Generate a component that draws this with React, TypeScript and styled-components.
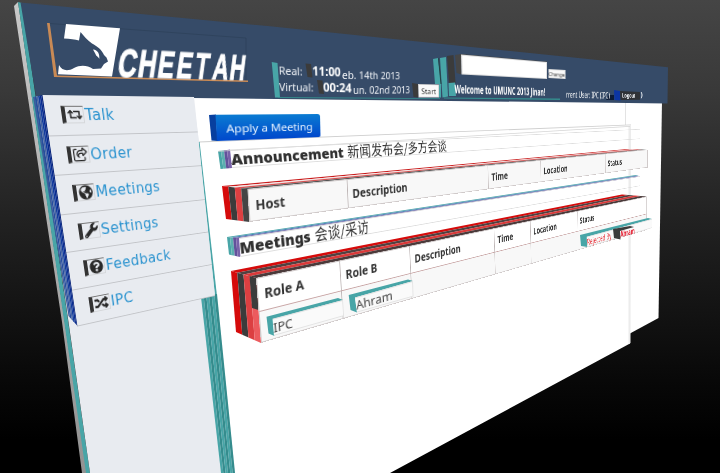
import React from "react";
import styled, { createGlobalStyle, css } from "styled-components";
import { FaRetweet, FaWrench, FaQuestionCircle, FaRandom, FaGlobeAmericas } from "react-icons/fa";
import { FaRegShareFromSquare } from "react-icons/fa6";

type Point = [number, number];
type Quad = [Point, Point, Point, Point];

const TEAL = "#48a5a7";
const TEAL_DARK = "#358c8d";
const NAVY = "#364b68";
const RED = "#d50b0b";
const SOFT_RED = "#dc3f41";
const COAL = "#3b3b3b";

/* Projects a w×h rectangle onto four corners (clockwise from top left). */
function project(w: number, h: number, q: Quad): string {
  const [[x0, y0], [x1, y1], [x2, y2], [x3, y3]] = q;
  const dx1 = x1 - x2;
  const dx2 = x3 - x2;
  const dx3 = x0 - x1 + x2 - x3;
  const dy1 = y1 - y2;
  const dy2 = y3 - y2;
  const dy3 = y0 - y1 + y2 - y3;
  const det = dx1 * dy2 - dx2 * dy1;
  const g = (dx3 * dy2 - dx2 * dy3) / det;
  const k = (dx1 * dy3 - dx3 * dy1) / det;
  const m = [
    (x1 - x0 + g * x1) / w, (y1 - y0 + g * y1) / w, 0, g / w,
    (x3 - x0 + k * x3) / h, (y3 - y0 + k * y3) / h, 0, k / h,
    0, 0, 1, 0,
    x0, y0, 0, 1,
  ];
  return `matrix3d(${m.map((n) => n.toFixed(9)).join(",")})`;
}

const outline = (points: Point[]) => `polygon(${points.map(([x, y]) => `${x}px ${y}px`).join(",")})`;

const GlobalStyle = createGlobalStyle`
  body { margin: 0; background: #000; }
  * { box-sizing: border-box; }
`;

const Scene = styled.main`
  position: relative;
  width: 720px;
  height: 473px;
  overflow: hidden;
  background: linear-gradient(#454545 0, #393939 90px, #202020 230px, #080808 380px, #000 440px);
  font-family: "DejaVu Sans", "Noto Sans CJK SC", sans-serif;
  color: #333;
`;

/* A solid side of an extruded element. */
const Facet = styled.div<{ $fill: string; $points: Point[] }>`
  position: absolute;
  inset: 0;
  background: ${(p) => p.$fill};
  clip-path: ${(p) => outline(p.$points)};
`;

/* The front of an element, tilted in space; its content flows normally. */
const Plane = styled.div<{ $w: number; $h: number; $quad: Quad }>`
  position: absolute;
  top: 0;
  left: 0;
  display: flex;
  align-items: center;
  width: ${(p) => p.$w}px;
  height: ${(p) => p.$h}px;
  transform-origin: 0 0;
  transform: ${(p) => project(p.$w, p.$h, p.$quad)};
  white-space: nowrap;
`;

const Menu = styled(Plane)`
  display: grid;
  grid-template-rows: repeat(6, 1fr);
  align-items: stretch;
  background: #e8ebf0;
`;

const MenuItem = styled.a`
  display: flex;
  align-items: center;
  gap: 1px;
  padding-left: 16px;
  border-bottom: 1px solid #c3c5c9;
  color: #2b93cf;
  font-size: 15.8px;
  letter-spacing: 0.4px;
`;

const MenuIcon = styled.span`
  display: grid;
  place-items: center;
  width: 23px;
  height: 17px;
  border: 1px solid #d5d7da;
  border-left: 4px solid #333;
  border-top-color: #777;
  color: #292929;
  font-size: 15px;
  letter-spacing: 0;
`;

const LogoArt = styled.svg`
  position: absolute;
  inset: 0;
  width: 720px;
  height: 110px;
`;

const Wordmark = styled(Plane)`
  display: grid;
  grid-template-columns: repeat(7, 20px);
  align-content: center;
  color: #fff;
  font: 700 39px/31px "Liberation Sans", sans-serif;
  -webkit-text-stroke: 1.2px #fff;

  span {
    display: block;
    width: 20px;
    transform: scaleX(0.66);
    transform-origin: 0 50%;
  }
`;

const Caption = styled(Plane)<{ $size: number; $bold?: boolean; $color?: string }>`
  font-family: "Noto Sans", sans-serif;
  font-size: ${(p) => p.$size}px;
  font-weight: ${(p) => (p.$bold ? 700 : 400)};
  color: ${(p) => p.$color ?? "#f1f4f8"};
`;

const SmallButton = styled(Caption)`
  justify-content: center;
  background: #fafafa;
  border: 1px solid #d3d3d3;
`;

const SearchField = styled(Plane)`
  background: #fff;
  border: 1px solid #dedede;
`;

const PrimaryButton = styled(Plane)`
  justify-content: center;
  border-radius: 0 3px 2px 0;
  background: linear-gradient(#0a7bd2, #0048cc);
  color: #e7f3ff;
  font: 11.6px "Noto Sans", sans-serif;
`;

const Heading = styled(Plane)`
  gap: 5px;
  border: 1px solid #dedede;
  border-left: 0;
  font-size: 16px;
  line-height: 19px;
  font-weight: 700;
  color: #303030;

  b {
    font-family: "Noto Sans", sans-serif;
    font-size: 16.6px;
  }
  span {
    font-weight: 400;
    font-family: "Noto Sans CJK SC", sans-serif;
    font-size: 16.5px;
  }
`;

const Table = styled(Plane)<{ $columns: string; $rows: number }>`
  display: grid;
  grid-template-columns: ${(p) => p.$columns};
  grid-template-rows: repeat(${(p) => p.$rows}, 1fr);
  align-items: stretch;
  background: #fff;
  border: 1px solid #d0caca;
`;

const Cell = styled.div<{ $shade?: boolean; $top?: boolean }>`
  display: flex;
  align-items: center;
  padding-left: 6px;
  border-right: 1px solid #bdb5b5;
  background: ${(p) => (p.$shade ? "#f8f8f8" : "#fff")};
  font: 700 13.3px "Noto Sans", sans-serif;
  ${(p) => p.$top && css`border-top: 1px solid #c9a6a6;`}
`;

const Tag = styled(Caption)`
  background: #fafafa;
  border: 1px solid #e4e4e4;
  border-left: 0;
`;

interface Band {
  fill: string;
  points: Point[];
}

const Facets = ({ bands }: { bands: Band[] }) => (
  <>
    {bands.map((b, i) => (
      <Facet key={i} $fill={b.fill} $points={b.points} />
    ))}
  </>
);

/* Splits the strip between two edges into equally wide bands. */
function slices(from: [Point, Point], to: [Point, Point], fills: string[]): Band[] {
  const at = (a: Point, b: Point, t: number): Point => [a[0] + (b[0] - a[0]) * t, a[1] + (b[1] - a[1]) * t];
  return fills.map((fill, i) => {
    const s = i / fills.length;
    const e = (i + 1) / fills.length;
    return {
      fill,
      points: [at(from[0], to[0], s), at(from[0], to[0], e), at(from[1], to[1], e), at(from[1], to[1], s)],
    };
  });
}

const menu = [
  { label: "Talk", icon: <FaRetweet /> },
  { label: "Order", icon: <FaRegShareFromSquare /> },
  { label: "Meetings", icon: <FaGlobeAmericas /> },
  { label: "Settings", icon: <FaWrench /> },
  { label: "Feedback", icon: <FaQuestionCircle /> },
  { label: "IPC", icon: <FaRandom /> },
];

const Backdrop = () => (
  <Facets
    bands={[
      { fill: "linear-gradient(#c9c9c9, #929292)", points: [[14, 6], [18, 2], [87, 473], [82, 473], [62, 322]] },
      { fill: TEAL, points: [[18, 2], [22, 3], [68, 320], [90, 473], [86, 473], [64, 320]] },
      { fill: "#fff", points: [[190, 95], [662, 101], [658.5, 318], [629, 334], [400, 400]] },
      { fill: "#e8ebf0", points: [[36, 94], [196, 96], [238, 473], [90, 473]] },
    ]}
  />
);

const Content = () => (
  <Facets
    bands={[
      { fill: "#fff", points: [[193, 96], [626, 102], [631, 125], [630, 343.5], [390, 473], [235, 473], [216, 290], [199, 142]] },
      { fill: "#e3e3e3", points: [[625, 102], [626, 102], [626, 125], [625, 125]] },
      { fill: "#cfcfcf", points: [[199, 141.5], [631, 124.5], [631, 125.3], [199, 142.4]] },
      { fill: "#ececec", points: [[628.5, 125], [631, 125], [630.5, 343], [628.5, 344]] },
      { fill: TEAL, points: [[198.5, 142], [199.6, 142], [217, 296], [215, 296]] },
      ...slices([[201, 297], [221, 473]], [[217, 294], [235, 473]], [TEAL, TEAL_DARK, TEAL, TEAL_DARK, TEAL, TEAL_DARK]),
    ]}
  />
);

const Logo = () => (
  <>
    <LogoArt viewBox="0 0 720 110">
      <path d="M50 23.5 L246 38 L246 81" fill="none" stroke="#2c4059" strokeWidth="0.7" />
      <path d="M47 23 L49.7 23 L57 75.5 L248 80.5 L248 82 L54 77 Z" fill="#c98a55" />
      <path
        d="M66 24 L120 28.2 L112 76.5 L58 74.2 L59 65 C62 71 68 71.5 74 68 C80 65 87 65 93 69 L101 68.5 L104 64 L108 61.5 L106.5 57.5 L104 55 C102 50 97 46 92 43.5 C87 40 84 36 80.5 32 L79 40.5 C75 39 70 39 64 38.5 Z"
        fill="#fff"
      />
      <path d="M93 49.5 C98 50 99.8 54 99.3 59 C98.2 56 96.5 57 95.5 54 Z" fill="#fff" />
    </LogoArt>
    <Wordmark $w={140} $h={31} $quad={[[121, 47], [248.5, 54], [245, 82], [116, 78.5]]}>
      {"CHEETAH".split("").map((c, i) => (
        <span key={i}>{c}</span>
      ))}
    </Wordmark>
  </>
);

const Clock = () => (
  <>
    <Facets
      bands={[
        { fill: TEAL, points: [[271.7, 62], [277.5, 63], [280, 97.5], [275, 97.5]] },
        { fill: TEAL_DARK, points: [[278, 97], [440, 98.3], [440, 99], [278, 98]] },
        { fill: COAL, points: [[305.5, 63.5], [311, 64], [312.5, 77.5], [307.5, 77]] },
        { fill: COAL, points: [[317, 80], [322.5, 80.5], [324, 94], [319, 93.5]] },
        { fill: COAL, points: [[412, 83], [418, 84], [418.5, 97.5], [413.5, 97]] },
      ]}
    />
    <Caption $w={23} $h={14} $size={10.5} $quad={[[278.5, 63.5], [301.5, 64.5], [302, 78.5], [279, 77.5]]}>Real:</Caption>
    <Caption $w={31} $h={14} $size={11.5} $bold $color="#fff" $quad={[[312, 63], [342, 64.5], [342, 78.5], [312.5, 77.5]]}>11:00</Caption>
    <Caption $w={65} $h={14} $size={10} $quad={[[342, 68], [401, 69.5], [401, 82], [342, 82]]}>eb. 14th 2013</Caption>
    <Caption $w={36} $h={14} $size={10.5} $quad={[[279, 80], [314.5, 80.5], [314.5, 94.5], [279.5, 94]]}>Virtual:</Caption>
    <Caption $w={31} $h={14} $size={11.5} $bold $color="#fff" $quad={[[323, 79.5], [353, 80.5], [353, 94.5], [323.5, 93.5]]}>00:24</Caption>
    <Caption $w={67} $h={14} $size={10} $quad={[[353, 83], [410, 83.5], [410, 96], [353, 97]]}>un. 02nd 2013</Caption>
    <SmallButton $w={28} $h={16} $size={9} $color="#333" $quad={[[418, 84], [439, 84.5], [439, 97.5], [418.5, 97.5]]}>Start</SmallButton>
  </>
);

const Account = () => (
  <>
    <Facets
      bands={[
        { fill: TEAL, points: [[433, 59], [438, 58], [441, 84], [441, 97.5], [439, 97.5], [439, 84], [435, 84]] },
        { fill: TEAL, points: [[440, 58], [446, 57], [448, 96.5], [442.5, 97.5]] },
        { fill: "#244", points: [[438, 58], [439, 58.5], [441.5, 84], [440.5, 84]] },
        { fill: COAL, points: [[447, 56], [453.5, 55], [455.5, 83], [449, 83]] },
        { fill: TEAL, points: [[448.5, 83], [455, 82.5], [456, 96], [449, 96]] },
        { fill: "#464646", points: [[455, 55], [461, 54], [547, 61.5], [547, 62], [461.5, 55], [461.5, 74.5], [456.5, 73]] },
        { fill: TEAL_DARK, points: [[444, 97.5], [560, 98.5], [560, 100], [444, 98.5]] },
        { fill: "#0d1c38", points: [[609, 95], [614, 95], [614, 100], [606, 100]] },
        { fill: "#0c35a4", points: [[614, 90], [620, 91], [620.5, 100.5], [614.5, 100]] },
        { fill: "#303236", points: [[620, 91], [640, 92], [640, 99.8], [620.5, 100]] },
      ]}
    />
    <SearchField $w={86} $h={19} $quad={[[461, 54.5], [547, 62], [547, 79], [461.5, 74.5]]} />
    <SmallButton $w={34} $h={15} $size={9} $color="#333" $quad={[[548.5, 69], [565, 70], [565, 79], [548.5, 78]]}>Change</SmallButton>
    <Caption $w={159} $h={14} $size={10.3} $bold $color="#fff" $quad={[[454.5, 81.5], [544, 85.5], [544, 98.5], [454.5, 96.5]]}>Welcome to UMUNC 2013 Jinan!</Caption>
    <Caption $w={94} $h={13} $size={9.8} $color="#fff" $quad={[[566, 88], [611, 89.5], [611, 101.5], [566, 100.5]]}>rrent User: IPC (IPC)</Caption>
    <Caption $w={32} $h={11} $size={8.6} $bold $quad={[[622, 91], [636, 92], [636, 99], [622, 99]]}>Logout</Caption>
    <Caption $w={5} $h={11} $size={9} $bold $quad={[[640.5, 89.5], [644, 89.5], [644, 99], [640.5, 99]]}>)</Caption>
  </>
);

const Sidebar = () => (
  <>
    <Facets
      bands={slices([[33, 97], [68.5, 316]], [[43, 95], [78, 326.5]], ["#3c5d9c", "#274da0", "#4765a0", "#123c9d", "#092c91", "#06237b"])}
    />
    <Menu $w={172} $h={231} $quad={[[42.5, 95], [194, 97], [215, 296], [77.5, 326.5]]}>
      {menu.map((item) => (
        <MenuItem key={item.label}>
          <MenuIcon>{item.icon}</MenuIcon>
          {item.label}
        </MenuItem>
      ))}
    </Menu>
  </>
);

const Announcement = () => (
  <>
    <Facets
      bands={[
        ...slices([[218, 151], [220.5, 169]], [[230, 149.5], [232, 168]], [TEAL, "#5cafb0", "#63519b", "#7861a9"]),
        { fill: "#d5d5d5", points: [[218, 151], [630, 126], [630, 126.7], [218, 151.8]] },
      ]}
    />
    <Heading $w={779} $h={19} $quad={[[230, 149.5], [640, 129], [640, 139], [232, 168]]}>
      <b>Announcement</b>
      <span>新闻发布会/多方会谈</span>
    </Heading>
    <Facets
      bands={[
        ...slices([[222, 186], [628, 149]], [[247, 189], [647, 149.5]], ["#c91c1c", "#f3e4e4", "#d65353", "#555"]),
        ...slices([[222, 186], [226, 219]], [[247.5, 189], [249.5, 222]], [RED, COAL, SOFT_RED, "#444"]),
      ]}
    />
    <Table $w={734} $h={33} $rows={1} $columns="15.1% 29.8% 14.9% 22.5% 1fr" $quad={[[247.5, 189], [647.5, 149.5], [647.5, 167.5], [249.5, 222]]}>
      {["Host", "Description", "Time", "Location", "Status"].map((name) => (
        <Cell key={name} $shade>{name}</Cell>
      ))}
    </Table>
  </>
);

const Meetings = () => (
  <>
    <Facets
      bands={[
        ...slices([[227, 237], [636, 175]], [[239, 238], [640, 176.5]], [TEAL, "#4b83b5", "#6d60a8"]),
        ...slices([[227, 237], [229, 254.5]], [[239, 238], [240.5, 257]], [TEAL, "#5cafb0", "#63519b", "#7861a9"]),
      ]}
    />
    <Heading $w={797} $h={19} $quad={[[238.5, 238], [640, 176], [640, 186], [240.5, 257]]}>
      <b>Meetings</b>
      <span>会谈/采访</span>
    </Heading>
    <Facets
      bands={[
        ...slices([[231, 271], [622, 194.5]], [[256, 278], [647, 196.5]], [RED, "#514141", "#d93a3a", "#4a3a3a"]),
        ...slices([[231, 271], [236, 332]], [[256, 278], [261, 343]], [RED, COAL, SOFT_RED, "#ec5b5e"]),
        { fill: COAL, points: [[249.5, 276], [256, 278], [258.5, 310], [252, 308]] },
      ]}
    />
    <Table $w={759} $h={65} $rows={2} $columns="12% 12.6% 19.4% 10.3% 15.8% 1fr" $quad={[[256, 278], [647, 196.5], [647, 230], [261, 343]]}>
      {["Role A", "Role B", "Description", "Time", "Location", "Status"].map((name) => (
        <Cell key={name}>{name}</Cell>
      ))}
      {[0, 1, 2, 3, 4, 5].map((i) => (
        <Cell key={i} $shade $top />
      ))}
    </Table>
    <Facets
      bands={[
        { fill: TEAL, points: [[266.5, 316.7], [338, 298], [343, 300], [273, 319], [274.5, 336], [268.5, 333.5]] },
        { fill: TEAL, points: [[348.7, 295], [408, 279.5], [413, 281], [355, 297.5], [357, 312.5], [350.5, 310]] },
        { fill: TEAL, points: [[580, 235], [648, 218], [652, 219], [587, 236.7], [587.5, 247], [581, 246]] },
      ]}
    />
    <Tag $w={78} $h={17} $size={13} $color="#444" $quad={[[272.5, 318.8], [343, 300], [344, 316], [274, 335.8]]}>IPC</Tag>
    <Tag $w={64} $h={16} $size={13} $color="#444" $quad={[[355, 297.5], [413, 281], [413.5, 296.5], [357, 312.5]]}>Ahram</Tag>
    <Tag $w={168} $h={13} $size={10.5} $color="#e83b43" $quad={[[586.7, 236.7], [652, 219], [652, 228], [587.3, 247]]}>Rejected By</Tag>
    <Facet $fill={COAL} $points={[[613, 229], [630, 226], [634, 227], [620, 231], [620.5, 239.5], [614, 238]]} />
    <Caption $w={33} $h={12} $size={10} $bold $color="#e5162a" $quad={[[620, 229.5], [634.5, 226], [634.5, 235], [620.5, 239]]}>Ahram</Caption>
  </>
);

export default function App() {
  return (
    <Scene>
      <GlobalStyle />
      <Backdrop />
      <Content />
      <Facet $fill={NAVY} $points={[[20.5, 2.5], [270, 26.3], [668, 67.3], [667.5, 103.5], [430, 100.7], [193, 98], [36, 96]]} />
      <Logo />
      <Clock />
      <Account />
      <Sidebar />
      <Facet $fill="#073f9f" $points={[[209, 115], [216, 114.5], [217.5, 141], [211.5, 140.5]]} />
      <PrimaryButton $w={106} $h={26} $quad={[[215.5, 114.7], [320, 114], [320.5, 137], [217, 141]]}>Apply a Meeting</PrimaryButton>
      <Announcement />
      <Meetings />
    </Scene>
  );
}
